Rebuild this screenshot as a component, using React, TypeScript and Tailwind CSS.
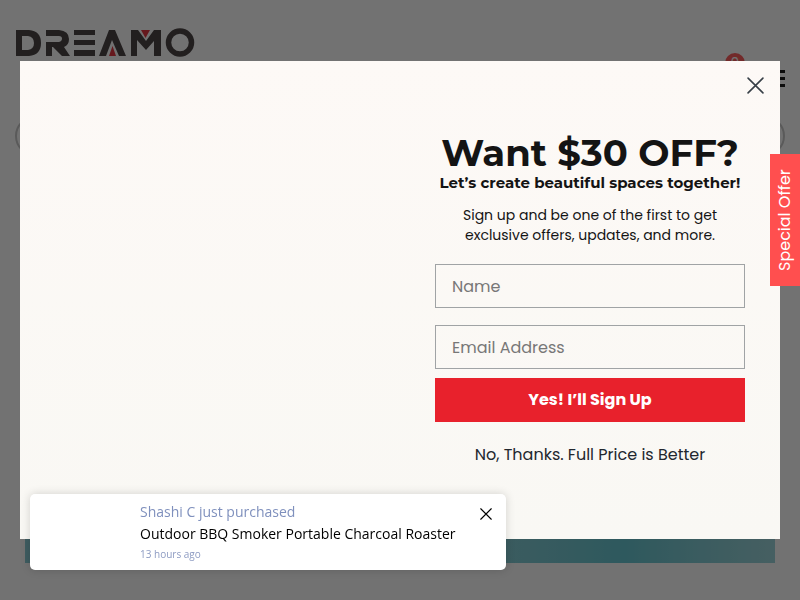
import React from "react";

function Logo() {
  return (
    <svg viewBox="-1 0 180 29" className="h-[29px] w-[180px]" role="img" aria-label="Dreamo">
      <g fill="#373031">
        <path fillRule="evenodd" d="M0 2H13Q25 3 25 15T13 28H0ZM6 8V22H12Q18 21 18 15T12 8Z" />
        <path d="M30 2H43Q53 3 53 11Q53 17 48 19L54 28H46L37 19H30V14H43Q46 13 46 10.500Q46 8 43 8H30Z" />
        <path d="M30 14H36V28H30Z" />
        <path d="M58 2H79V7H58ZM58 12H79V17H58ZM58 22H79V28H58Z" />
        <path d="M93 2H99L110 28H103L96 12L90 28H83Z" />
        <path d="M115 2H122L130 13L138 2H145V28H138V13L130 22L121 12V28H115Z" />
      </g>
      <circle cx="164" cy="14.500" r="11.500" fill="none" stroke="#373031" strokeWidth="5.500" />
      <path d="M96.500 18L100 28H93Z" fill="#e0202b" />
      <path d="M125 2H134L129.500 10Z" fill="#e0202b" />
    </svg>
  );
}

function Cross({ className }: { className: string }) {
  return (
    <svg viewBox="0 0 16 16" className={className} fill="none" stroke="currentColor" aria-hidden="true">
      <path d="M1 1L15 15M15 1L1 15" strokeLinecap="round" strokeWidth="1.500" />
    </svg>
  );
}

function StorePage() {
  return (
    <div className="min-h-screen bg-white">
      <header className="px-[15px] pt-7">
        <Logo />
        <div className="-mt-1 flex items-start justify-end gap-7">
          <div className="relative pt-3">
            <svg viewBox="0 0 28 22" className="h-6 w-7" fill="none" stroke="#373031" strokeWidth="2" aria-hidden="true">
              <path d="M1 8H27L23 21H5ZM7 8L12 1M21 8L16 1" />
            </svg>
            <span className="absolute top-0 -right-2 flex size-5 items-center justify-center rounded-full bg-[#ff4b4b] text-sm text-white">
              0
            </span>
          </div>
          <button aria-label="Menu" className="flex h-[51px] w-5 flex-col justify-center gap-1">
            <span className="h-[3px] w-full bg-black" />
            <span className="h-[3px] w-full bg-black" />
            <span className="h-[3px] w-full bg-black" />
          </button>
        </div>
        <input aria-label="Search" className="mt-3 block h-10 w-full rounded-full border-2 border-[#c3c3c3] px-4" />
      </header>
      <main className="px-[25px] pt-[19px]">
        <div className="h-[388px] bg-linear-to-r from-[#7dc9d2] from-60% via-[#55c0cc] via-80% to-[#91d0d6]" />
      </main>
    </div>
  );
}

function SignupDialog() {
  const field =
    "block h-11 w-full border border-[#a0a3a5] bg-transparent px-4 text-base text-[#1a1a1a] placeholder:text-[#777777]";
  return (
    <div className="fixed inset-0 flex items-center bg-[rgba(20,20,20,0.6)] px-5">
      <section
        role="dialog"
        aria-labelledby="signup-title"
        className="relative grid min-h-[478px] w-full grid-cols-2 items-center bg-linear-to-b from-[#fdf9f6] to-[#f9f8f4]"
      >
        <button aria-label="Close dialog" className="absolute top-4 right-4 text-[#373f47]">
          <Cross className="size-[17px]" />
        </button>
        <form className="col-start-2 px-[35px] pt-[10px] text-center text-[#141414]">
          <h2 id="signup-title" className="font-['Montserrat','Inter',sans-serif] text-[37px] leading-10 font-bold whitespace-nowrap">
            Want $30 OFF?
          </h2>
          <p className="font-['Montserrat','Inter',sans-serif] text-[15px] leading-5 font-bold whitespace-nowrap">
            Let’s create beautiful spaces together!
          </p>
          <p className="mt-3 text-sm leading-5">
            Sign up and be one of the first to get
            <br />
            exclusive offers, updates, and more.
          </p>
          <input aria-label="Name" placeholder="Name" className={`mt-[19px] ${field}`} />
          <input aria-label="Email Address" type="email" placeholder="Email Address" className={`mt-[17px] ${field}`} />
          <button type="submit" className="mt-[9px] h-11 w-full bg-[#e8212c] text-base font-bold text-white">
            Yes! I’ll Sign Up
          </button>
          <button type="button" className="mt-[11px] h-11 w-full text-base text-[#22272e]">
            No, Thanks. Full Price is Better
          </button>
        </form>
      </section>
    </div>
  );
}

function PurchaseToast() {
  return (
    <aside className="fixed bottom-[30px] left-[30px] h-[76px] w-[476px] max-w-[calc(100vw-60px)] rounded-[5px] bg-white pt-2 pl-[110px] font-['Open_Sans','Noto_Sans',sans-serif] text-sm shadow-[0_0_10px_rgba(0,0,0,0.16)]">
      <p className="leading-5 text-[#7f90bd]">Shashi C just purchased</p>
      <a href="#product" className="block leading-6 text-black">
        Outdoor BBQ Smoker Portable Charcoal Roaster
      </a>
      <p className="text-[10px] leading-4 text-[#8d9bc2]">13 hours ago</p>
      <button aria-label="Dismiss" className="absolute top-[14px] right-[14px] text-black">
        <Cross className="size-3" />
      </button>
    </aside>
  );
}

export default function App() {
  return (
    <div className="font-['Poppins','Inter','Open_Sans',sans-serif]">
      <StorePage />
      <SignupDialog />
      <button className="fixed top-[154px] right-0 h-[132px] w-[30px] rotate-180 bg-[#ff4f4f] text-base text-white [writing-mode:vertical-rl]">
        Special Offer
      </button>
      <PurchaseToast />
    </div>
  );
}
